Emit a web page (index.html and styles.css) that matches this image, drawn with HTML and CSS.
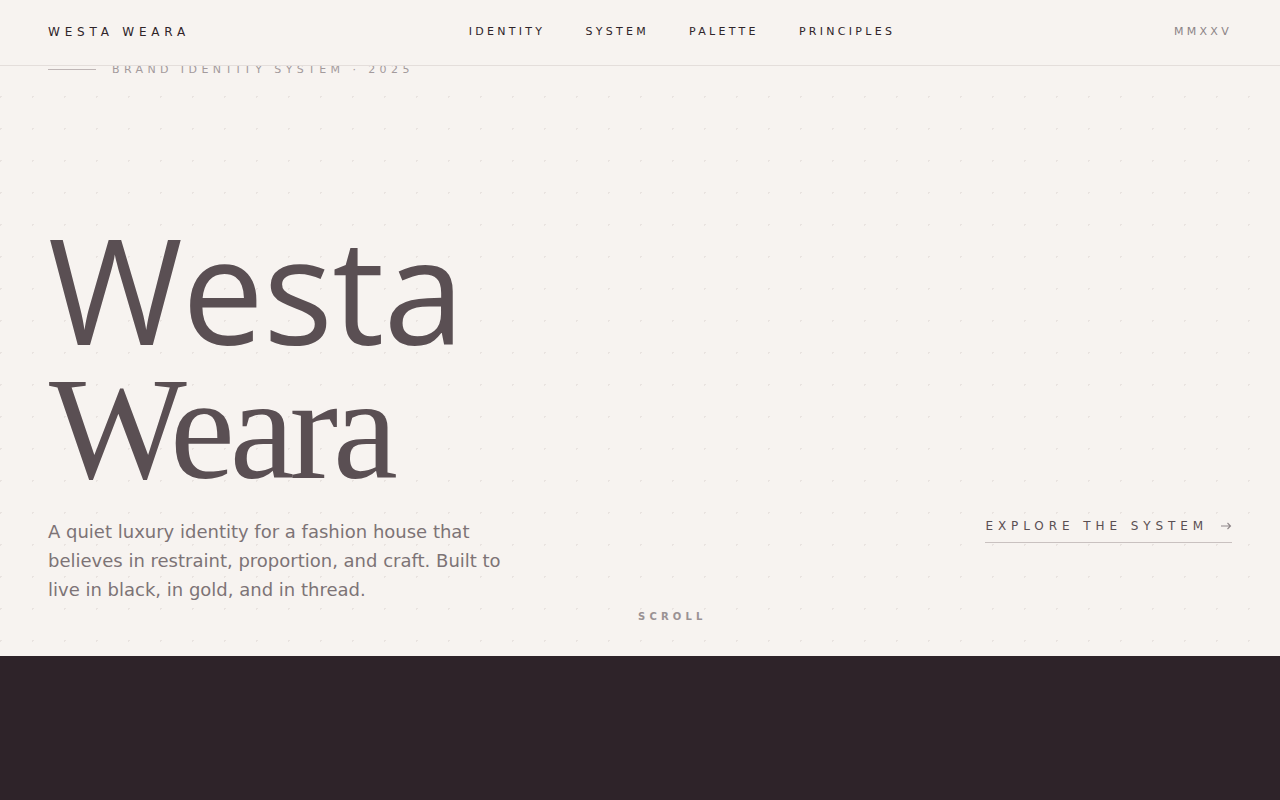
FILE: index.html
```html
<!DOCTYPE html>
<html lang="en">
<head>
<meta charset="utf-8">
<title>Westa Weara — Brand Identity System</title>
<link rel="stylesheet" href="styles.css">
</head>
<body>
<header class="site-header">
  <a class="logo" href="#">WESTA WEARA</a>
  <nav class="main-nav">
    <a href="#identity">IDENTITY</a>
    <a href="#system">SYSTEM</a>
    <a href="#palette">PALETTE</a>
    <a href="#principles">PRINCIPLES</a>
  </nav>
  <span class="year">MMXXV</span>
</header>

<main>
  <section class="hero">
    <div class="eyebrow">
      <span class="eyebrow-line"></span>
      <span class="eyebrow-text">BRAND IDENTITY SYSTEM · 2025</span>
    </div>
    <div class="hero-body">
      <h1 class="hero-title">
        <span class="title-sans">Westa</span>
        <span class="title-serif">Weara</span>
      </h1>
      <div class="hero-row">
        <p class="hero-lead">A quiet luxury identity for a fashion house that believes in restraint, proportion, and craft. Built to live in black, in gold, and in thread.</p>
        <a class="cta" href="#system">
          <span>EXPLORE THE SYSTEM</span>
          <svg class="cta-arrow" width="12" height="12" viewBox="0 0 12 12" aria-hidden="true">
            <path d="M1 6 H10.5 M7.5 3 L10.5 6 L7.5 9" fill="none" stroke="currentColor" stroke-width="1.1"/>
          </svg>
        </a>
      </div>
    </div>
    <div class="scroll">SCROLL</div>
  </section>
  <section class="dark-section" id="identity"></section>
</main>
</body>
</html>
```

FILE: styles.css
```css
* { box-sizing: border-box; }

html, body {
  margin: 0;
  padding: 0;
}

body {
  background-color: #f7f3f0;
  color: #2f2429;
  font-family: "DejaVu Sans", sans-serif;
}

a { color: inherit; text-decoration: none; }

.site-header {
  position: fixed;
  top: 0;
  left: 0;
  right: 0;
  z-index: 10;
  height: 66px;
  padding: 0 48px 2px;
  display: flex;
  align-items: center;
  justify-content: space-between;
  background: #f7f3f0;
  border-bottom: 1px solid #e4dedb;
}

.logo {
  font-size: 12px;
  letter-spacing: 0.4em;
  color: #2f2429;
}

.main-nav {
  display: flex;
  gap: 40px;
  font-size: 11px;
  letter-spacing: 0.3em;
  color: #2f2429;
}

.year {
  font-size: 11px;
  letter-spacing: 0.3em;
  color: #8c8386;
}

.hero {
  position: relative;
  height: 656px;
  padding: 63px 48px 52px;
  display: flex;
  flex-direction: column;
  justify-content: space-between;
  background-image: radial-gradient(circle at 0.5px 0.5px, #e9e3e0 1px, transparent 1.2px);
  background-size: 32px 32px;
}

.eyebrow {
  display: flex;
  align-items: center;
  gap: 16px;
}

.eyebrow-line {
  width: 48px;
  height: 1px;
  background: #bfb6b6;
}

.eyebrow-text {
  font-size: 11px;
  letter-spacing: 0.4em;
  color: #a39a9c;
}

.hero-title {
  margin: 0 0 18px;
  font-weight: 400;
  font-size: 146px;
  color: #5a4f53;
}

.title-sans {
  display: block;
  font-family: "Open Sans", "Noto Sans", sans-serif;
  line-height: 140px;
  letter-spacing: -0.005em;
}

.title-serif {
  display: block;
  font-family: "Liberation Serif", serif;
  line-height: 140px;
  letter-spacing: -0.035em;
  padding-left: 1px;
}

.hero-row {
  display: flex;
  justify-content: space-between;
  align-items: flex-start;
}

.hero-lead {
  margin: 0;
  max-width: 480px;
  font-size: 18px;
  line-height: 29px;
  color: #7d7376;
}

.cta {
  display: flex;
  align-items: center;
  gap: 12px;
  padding: 0 0 7px;
  border-bottom: 1px solid #c9c1c0;
  font-size: 12px;
  line-height: 18px;
  letter-spacing: 0.41em;
  color: #5a4f53;
}

.cta-arrow {
  display: block;
  color: #8f8789;
}

.scroll {
  position: absolute;
  left: 638px;
  top: 611px;
  font-size: 10px;
  font-weight: 600;
  letter-spacing: 0.42em;
  color: #9a9294;
}

.dark-section {
  height: 400px;
  background: #2e2329;
}
```
